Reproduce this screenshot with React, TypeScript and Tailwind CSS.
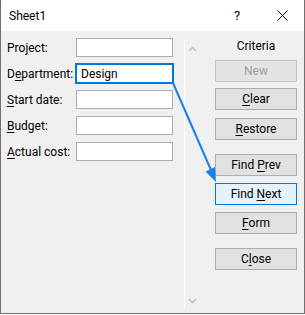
import type { ReactNode } from 'react';

const font = { fontFamily: 'Roboto, "Noto Sans", "Liberation Sans", sans-serif' };

// label text with one underlined access key
function Key({ pre, k, post }: { pre?: string; k: string; post?: string }) {
  return (
    <span className="whitespace-pre">
      {pre}
      <span className="underline underline-offset-2 decoration-1">{k}</span>
      {post}
    </span>
  );
}

function Field({ label, value, focused }: { label: ReactNode; value?: string; focused?: boolean }) {
  return (
    <div className="flex items-center h-[19px]">
      <div className="w-[69px] text-[12px] text-black leading-none whitespace-nowrap">{label}</div>
      <div
        className={`w-[97px] h-[19px] bg-white border flex items-center pl-[4px] text-[12px] text-black ${
          focused ? 'border-[#0078d7] shadow-[0_0_0_1px_#0078d7]' : 'border-[#adadad]'
        }`}
      >
        {value}
      </div>
    </div>
  );
}

function Btn({ children, mt, disabled, active }: { children: ReactNode; mt: string; disabled?: boolean; active?: boolean }) {
  return (
    <div
      className={`${mt} w-[82px] h-[22px] border flex items-center justify-center text-[12px] ${
        disabled
          ? 'bg-[#e3e3e3] border-[#c4c4c4] text-[#9aa0a6]'
          : active
            ? 'bg-[#e5f1fb] border-[#0078d7] text-black'
            : 'bg-[#e1e1e1] border-[#adadad] text-black'
      }`}
    >
      {children}
    </div>
  );
}

export default function App() {
  return (
    <div className="w-[305px] h-[315px] bg-white" style={font}>
      <div className="relative w-[305px] h-[314px] border-x border-b border-[#707070] flex flex-col">
        {/* title bar */}
        <div className="h-[31px] bg-white flex items-center pl-[8px] shrink-0">
          <span className="text-[12px] text-black">Sheet1</span>
          <span className="ml-auto w-[10px] text-center text-[13px] text-black">?</span>
          <svg width="11" height="11" viewBox="0 0 11 11" className="mr-[16px] ml-[35px]">
            <path d="M0.5 0.5 L10.5 10.5 M10.5 0.5 L0.5 10.5" stroke="#000" strokeWidth="1" />
          </svg>
        </div>

        {/* body */}
        <div className="flex-1 bg-[#f0f0f0] flex">
          <div className="w-[183px] pl-[6px] pt-[7px] flex flex-col gap-[7px]">
            <Field label={<Key pre="Pro" k="j" post="ect:" />} />
            <Field label={<Key pre="D" k="e" post="partment:" />} value="Design" focused />
            <Field label={<Key k="S" post="tart date:" />} />
            <Field label={<Key k="B" post="udget:" />} />
            <Field label={<Key k="A" post="ctual cost:" />} />
          </div>

          {/* scrollbar */}
          <div className="w-[15px] pt-[8px] pb-[5px] flex">
            <div className="w-px bg-white" />
            <div className="flex-1 flex flex-col items-center justify-between pt-[7px] pb-[4px]">
              <svg width="9" height="6" viewBox="0 0 9 6">
                <path d="M1 5 L4.5 1.5 L8 5" stroke="#c2c2c2" strokeWidth="1.6" fill="none" />
              </svg>
              <svg width="9" height="6" viewBox="0 0 9 6">
                <path d="M1 1 L4.5 4.5 L8 1" stroke="#c2c2c2" strokeWidth="1.6" fill="none" />
              </svg>
            </div>
          </div>

          {/* buttons */}
          <div className="flex-1 pl-[16px] pt-[6px] flex flex-col">
            <div className="w-[82px] text-center text-[12px] text-black leading-[18px]">Criteria</div>
            <Btn mt="mt-[5px]" disabled>New</Btn>
            <Btn mt="mt-[6px]"><Key k="C" post="lear" /></Btn>
            <Btn mt="mt-[8px]"><Key k="R" post="estore" /></Btn>
            <Btn mt="mt-[14px]"><Key pre="Find " k="P" post="rev" /></Btn>
            <Btn mt="mt-[7px]" active><Key pre="Find " k="N" post="ext" /></Btn>
            <Btn mt="mt-[7px]"><Key k="F" post="orm" /></Btn>
            <Btn mt="mt-[14px]"><Key pre="C" k="l" post="ose" /></Btn>
          </div>
        </div>

        {/* callout arrow */}
        <svg className="absolute left-0 top-0 pointer-events-none" width="305" height="314">
          <line x1="172" y1="83" x2="210" y2="170" stroke="#1a7fe8" strokeWidth="2" />
          <polygon points="215,182 204.5,171.5 214,167" fill="#1a7fe8" />
        </svg>
      </div>
    </div>
  );
}
